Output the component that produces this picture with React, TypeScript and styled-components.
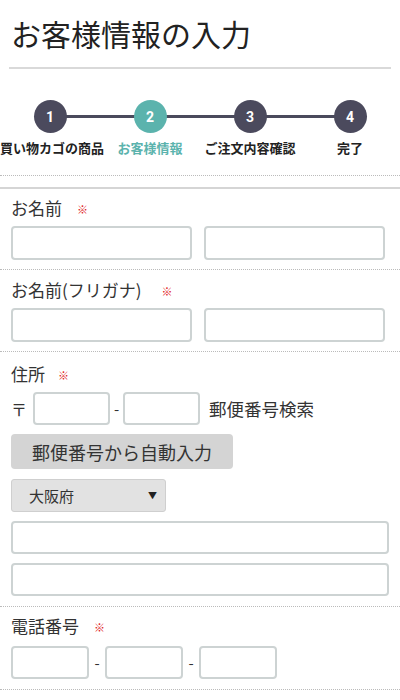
import React from "react";
import styled, { createGlobalStyle } from "styled-components";

const Global = createGlobalStyle`
  html, body { margin: 0; padding: 0; background: #fff; }
  body { font-family: "Noto Sans CJK JP", "Noto Sans", sans-serif; color: #333; }
  * { box-sizing: border-box; }
`;

const Page = styled.div`
  width: 400px;
  background: #fff;
`;

const Title = styled.h1`
  margin: 0;
  padding: 13px 11px 0;
  font-size: 30px;
  line-height: 40px;
  font-weight: 400;
  color: #222;
`;

const Rule = styled.div`
  margin: 14px 9px 0;
  height: 2px;
  background: #d9d9d9;
`;

const Steps = styled.div`
  display: grid;
  grid-template-columns: repeat(4, 100px);
  margin-top: 31px;
`;

const Step = styled.div<{ $first?: boolean; $last?: boolean }>`
  position: relative;
  display: flex;
  flex-direction: column;
  align-items: center;
  &::before, &::after {
    content: "";
    position: absolute;
    top: 15px;
    height: 3px;
    width: 50%;
    background: #4a4a5c;
  }
  &::before { left: 0; display: ${(p) => (p.$first ? "none" : "block")}; }
  &::after { right: 0; display: ${(p) => (p.$last ? "none" : "block")}; }
`;

const Circle = styled.div<{ $active?: boolean }>`
  position: relative;
  z-index: 1;
  width: 33px;
  height: 33px;
  border-radius: 50%;
  background: ${(p) => (p.$active ? "#5bb3ad" : "#4b4a5d")};
  color: #fff;
  font-family: "Roboto", "Noto Sans", sans-serif;
  font-weight: 700;
  font-size: 14px;
  display: flex;
  align-items: center;
  justify-content: center;
`;

const StepLabel = styled.div<{ $active?: boolean; $first?: boolean }>`
  margin-top: 7px;
  align-self: ${(p) => (p.$first ? "flex-start" : "center")};
  font-size: 13px;
  line-height: 16px;
  font-weight: 700;
  white-space: nowrap;
  color: ${(p) => (p.$active ? "#5bb3ad" : "#222")};
`;

const DottedLine = styled.div`
  margin-top: 19px;
  border-top: 1px dotted #bbb;
`;

const SolidLine = styled.div`
  margin-top: 11px;
  height: 2px;
  background: #d5d5d5;
`;

const Section = styled.section<{ $top: number }>`
  padding: ${(p) => p.$top}px 11px 0;
  border-bottom: 1px dotted #bbb;
  display: flex;
  flex-direction: column;
  align-items: flex-start;
`;

const Label = styled.div`
  height: 22px;
  font-size: 17px;
  line-height: 22px;
  color: #333;
  display: flex;
  align-items: center;
`;

const Req = styled.span<{ $gap: number }>`
  position: relative;
  top: 1px;
  color: #e02020;
  font-size: 11px;
  font-weight: 700;
  margin-left: ${(p) => p.$gap}px;
`;

const Pair = styled.div<{ $mt: number; $mb: number }>`
  display: grid;
  grid-template-columns: 181px 181px;
  gap: 12px;
  margin: ${(p) => p.$mt}px 0 ${(p) => p.$mb}px;
`;

const Input = styled.input<{ $w?: number; $h?: number }>`
  display: block;
  width: ${(p) => (p.$w ? `${p.$w}px` : "100%")};
  height: ${(p) => p.$h ?? 33}px;
  border: 2px solid #cdd3d3;
  border-radius: 4px;
  background: #fff;
  padding: 0 6px;
  font-size: 14px;
  outline: none;
`;

const Row = styled.div<{ $mt: number; $mb?: number }>`
  display: flex;
  align-items: center;
  height: 33px;
  margin: ${(p) => p.$mt}px 0 ${(p) => p.$mb ?? 0}px;
`;

const Dash = styled.span<{ $w: number }>`
  width: ${(p) => p.$w}px;
  text-align: center;
  font-size: 15px;
  color: #333;
`;

const Postal = styled.span`
  width: 22px;
  font-size: 16px;
  color: #333;
`;

const LinkText = styled.span`
  margin-left: 9px;
  font-size: 17.5px;
  line-height: 24px;
  color: #333;
`;

const FullInput = styled.div<{ $mt: number; $mb?: number }>`
  margin: ${(p) => p.$mt}px 0 ${(p) => p.$mb ?? 0}px;
  width: 378px;
`;

const AutoButton = styled.button`
  margin-top: 9px;
  width: 222px;
  height: 35px;
  border: none;
  border-radius: 4px;
  background: #d4d4d4;
  font-family: inherit;
  font-size: 18px;
  color: #333;
  padding: 0;
`;

const Select = styled.div`
  margin-top: 10px;
  width: 155px;
  height: 33px;
  border: 1px solid #cfcfcf;
  border-radius: 3px;
  background: #e2e2e2;
  display: flex;
  align-items: center;
  justify-content: space-between;
  padding: 0 8px 0 17px;
  font-size: 15px;
  color: #333;
`;

const Arrow = styled.span`
  font-size: 9px;
  color: #222;
`;

const steps = ["買い物カゴの商品", "お客様情報", "ご注文内容確認", "完了"];

export default function App() {
  return (
    <Page>
      <Global />
      <Title>お客様情報の入力</Title>
      <Rule />
      <Steps>
        {steps.map((s, i) => (
          <Step key={s} $first={i === 0} $last={i === steps.length - 1}>
            <Circle $active={i === 1}>{i + 1}</Circle>
            <StepLabel $active={i === 1} $first={i === 0}>
              {s}
            </StepLabel>
          </Step>
        ))}
      </Steps>
      <DottedLine />
      <SolidLine />
      <Section $top={8}>
        <Label>
          お名前<Req $gap={15}>※</Req>
        </Label>
        <Pair $mt={7} $mb={9}>
          <Input $h={34} />
          <Input $h={34} />
        </Pair>
      </Section>
      <Section $top={9}>
        <Label>
          お名前(フリガナ)<Req $gap={20}>※</Req>
        </Label>
        <Pair $mt={7} $mb={9}>
          <Input $h={34} />
          <Input $h={34} />
        </Pair>
      </Section>
      <Section $top={11}>
        <Label>
          住所<Req $gap={13}>※</Req>
        </Label>
        <Row $mt={7}>
          <Postal>〒</Postal>
          <Input $w={77} />
          <Dash $w={13}>-</Dash>
          <Input $w={77} />
          <LinkText>郵便番号検索</LinkText>
        </Row>
        <AutoButton>郵便番号から自動入力</AutoButton>
        <Select>
          大阪府<Arrow>▼</Arrow>
        </Select>
        <FullInput $mt={9}>
          <Input />
        </FullInput>
        <FullInput $mt={9} $mb={10}>
          <Input />
        </FullInput>
      </Section>
      <Section $top={8}>
        <Label>
          電話番号<Req $gap={15}>※</Req>
        </Label>
        <Row $mt={9} $mb={10}>
          <Input $w={78} />
          <Dash $w={16}>-</Dash>
          <Input $w={78} />
          <Dash $w={16}>-</Dash>
          <Input $w={78} />
        </Row>
      </Section>
    </Page>
  );
}
